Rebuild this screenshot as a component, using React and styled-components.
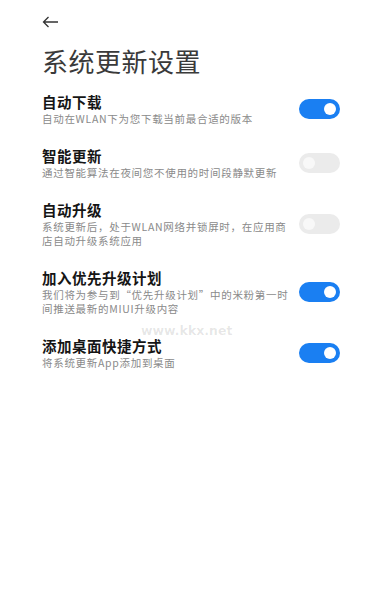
import React, { useState } from 'react';
import styled, { createGlobalStyle } from 'styled-components';

const GlobalStyle = createGlobalStyle`
  body {
    margin: 0;
    background: #ffffff;
    font-family: "Noto Sans CJK SC", "Noto Sans", sans-serif;
  }
`;

const Page = styled.div`
  position: relative;
  min-height: 614px;
  padding: 12px 50px 0 42px;
  box-sizing: border-box;
  background: #fff;
`;

const BackButton = styled.button`
  display: flex;
  align-items: center;
  height: 20px;
  padding: 0;
  border: none;
  background: transparent;
  color: #333;
`;

const Title = styled.h1`
  margin: 12px 0 0;
  font-size: 26px;
  line-height: 34px;
  font-weight: 400;
  color: #3a3a3a;
  letter-spacing: 0.5px;
`;

const List = styled.div`
  margin-top: 4px;
  display: flex;
  flex-direction: column;
`;

const Row = styled.div`
  display: flex;
  align-items: center;
  justify-content: space-between;
  padding: 11px 0;
`;

const Texts = styled.div`
  display: flex;
  flex-direction: column;
  gap: 1px;
`;

const RowTitle = styled.div`
  font-size: 14.5px;
  line-height: 18px;
  font-weight: 700;
  color: #151515;
  letter-spacing: 0.5px;
`;

const RowDesc = styled.div`
  font-size: 10.5px;
  line-height: 13px;
  color: #8a8a8a;
  letter-spacing: 0.7px;
  white-space: nowrap;
`;

const Toggle = styled.button`
  flex: none;
  position: relative;
  width: 41px;
  height: 20px;
  padding: 0;
  border: none;
  border-radius: 10px;
  background: ${p => (p.$on ? '#1a7ff2' : '#ebebeb')};

  &::after {
    content: '';
    position: absolute;
    top: 4px;
    left: ${p => (p.$on ? '25px' : '4px')};
    width: 12px;
    height: 12px;
    border-radius: 50%;
    background: ${p => (p.$on ? '#ffffff' : '#f8f8f8')};
  }
`;

const Watermark = styled.div`
  position: absolute;
  left: 141px;
  top: 323px;
  font-family: "DejaVu Sans", sans-serif;
  font-size: 12.5px;
  font-weight: 700;
  color: rgba(0, 0, 0, 0.1);
  pointer-events: none;
`;

const settings = [
  { title: '自动下载', desc: ['自动在WLAN下为您下载当前最合适的版本'], on: true },
  { title: '智能更新', desc: ['通过智能算法在夜间您不使用的时间段静默更新'], on: false },
  { title: '自动升级', desc: ['系统更新后，处于WLAN网络并锁屏时，在应用商', '店自动升级系统应用'], on: false },
  { title: '加入优先升级计划', desc: ['我们将为参与到“优先升级计划”中的米粉第一时', '间推送最新的MIUI升级内容'], on: true },
  { title: '添加桌面快捷方式', desc: ['将系统更新App添加到桌面'], on: true },
];

const App = () => {
  const [states, setStates] = useState(settings.map(s => s.on));

  const flip = (i) => {
    setStates(prev => prev.map((v, j) => (j === i ? !v : v)));
  };

  return (
    <Page>
      <GlobalStyle />
      <BackButton aria-label="返回">
        <svg width="17" height="12" viewBox="0 0 17 12" fill="none" stroke="#333" strokeWidth="1.3">
          <path d="M16 6H1.5M6.5 1L1.5 6l5 5" />
        </svg>
      </BackButton>
      <Title>系统更新设置</Title>
      <List>
        {settings.map((s, i) => (
          <Row key={s.title}>
            <Texts>
              <RowTitle>{s.title}</RowTitle>
              {s.desc.map(line => (
                <RowDesc key={line}>{line}</RowDesc>
              ))}
            </Texts>
            <Toggle $on={states[i]} onClick={() => flip(i)} aria-label={s.title} />
          </Row>
        ))}
      </List>
      <Watermark>www.kkx.net</Watermark>
    </Page>
  );
};

export default App;
